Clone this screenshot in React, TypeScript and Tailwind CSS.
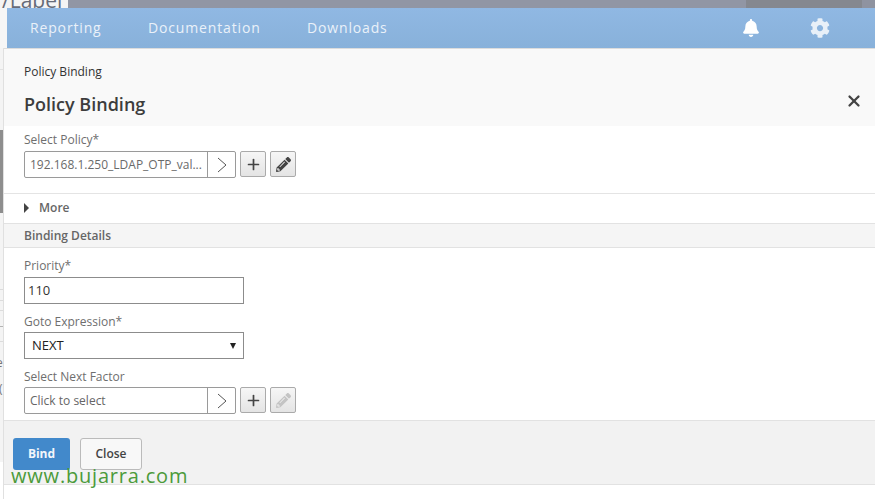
import { FaBell, FaCog, FaPencilAlt } from "react-icons/fa";
import { Plus, X } from "lucide-react";

function Picker({ value, muted, valueClass }: { value: string; muted?: boolean; valueClass: string }) {
  return (
    <div className="flex items-start gap-1">
      <div className="flex h-[27px] w-[212px] rounded-[2px] border border-[#9a9a9a] bg-white">
        <div className={`flex-1 truncate pl-[5px] text-[12px] leading-[25px] ${valueClass}`}>{value}</div>
        <div className="flex w-[28px] items-center justify-center border-l border-[#9a9a9a]">
          <svg width="10" height="16" viewBox="0 0 10 16" fill="none" stroke="#555" strokeWidth="1">
            <path d="M1 1l8 7-8 7" />
          </svg>
        </div>
      </div>
      <button className="flex h-[26px] w-[26px] items-center justify-center rounded-[2px] border border-[#aaa] bg-gradient-to-b from-[#f6f6f6] to-[#e4e4e4] text-[#444]">
        <Plus size={17} strokeWidth={2.4} />
      </button>
      <button className="flex h-[26px] w-[26px] items-center justify-center rounded-[2px] border border-[#aaa] bg-gradient-to-b from-[#f6f6f6] to-[#e4e4e4]">
        <FaPencilAlt size={15} className={muted ? "text-[#c4c4c4]" : "text-[#444]"} />
      </button>
    </div>
  );
}

function Label({ children }: { children: string }) {
  return <div className="text-[12px] leading-[16px] text-[#6e6e6e]">{children}</div>;
}

export default function App() {
  return (
    <div
      className="relative flex h-[499px] w-[875px] flex-col overflow-hidden bg-white"
      style={{ fontFamily: '"Open Sans", "Noto Sans", sans-serif' }}
    >
      {/* page behind the dialog */}
      <div className="flex h-2 shrink-0 overflow-hidden">
        <div className="h-2 w-[68px] overflow-hidden bg-[#f4f4f4] text-[21px] leading-[24px] text-[#666b78]">
          <div className="-mt-[12px] pl-[2px]">/Label</div>
        </div>
        <div className="flex-1 bg-[#9196a4]" />
        <div className="w-[116px] bg-[#85888f]" />
        <div className="w-[13px] bg-[#8f93a0]" />
      </div>

      <div className="flex h-10 shrink-0">
        <div className="w-[7px] bg-[#f6f6f6]" />
        <nav className="flex flex-1 items-center bg-gradient-to-b from-[#90b8e3] to-[#88b1da] pb-[1px] pl-[23px] text-[14px] tracking-[0.85px] text-[#eaf1f9]">
          <span className="w-[118px]">Reporting</span>
          <span className="w-[159px]">Documentation</span>
          <span>Downloads</span>
          <div className="ml-auto flex items-center gap-[50px] pr-[45px]">
            <FaBell size={18} className="text-white" />
            <FaCog size={20} className="text-[#e8f0f8]" />
          </div>
        </nav>
      </div>

      <div className="flex min-h-0 flex-1">
        {/* scrolled page strip on the left */}
        <div className="w-1 shrink-0 border-r border-[#e0e0e0] bg-white">
          <div className="h-[414px] overflow-hidden bg-[#f4f4f4] text-[12px] leading-[16px] text-[#777]">
            <div className="mt-[21px] h-[1px] bg-[#e2e2e2]" />
            <div className="mt-[60px] h-[83px] bg-[#8e8e8e]" />
            <div className="mt-[76px] h-[1px] bg-[#dcdcdc]" />
            <div className="mt-[10px] h-[1px] bg-[#dcdcdc]" />
            <div className="mt-[9px] h-[1px] bg-[#dcdcdc]" />
            <div className="mt-[15px] h-[1px] bg-[#b4b4b4]" />
            <div className="mt-[14px] h-[1px] bg-[#dcdcdc]" />
            <div className="mt-[13px] -ml-[4px]">e</div>
            <div className="mt-[10px] -ml-[1px]">(</div>
          </div>
        </div>

        <div className="flex min-w-0 flex-1 flex-col">
          <header className="h-[78px] shrink-0 border-t border-[#dcdcdc] bg-[#f9f9f9] pl-5 pt-[15px]">
            <div className="text-[12px] leading-[16px] text-[#333]">Policy Binding</div>
            <div className="flex items-center justify-between pr-[12px] pt-[12px]">
              <h1 className="text-[18px] font-semibold leading-[24px] text-[#3d3d3d]">Policy Binding</h1>
              <X size={18} strokeWidth={3} className="-mt-[7px] text-[#444]" />
            </div>
          </header>

          <section className="h-[68px] shrink-0 border-b border-[#e4e4e4] pl-5 pt-[6px]">
            <Label>Select Policy*</Label>
            <div className="pt-[3px]">
              <Picker value="192.168.1.250_LDAP_OTP_val..." valueClass="text-[#6a6a6a]" />
            </div>
          </section>

          <div className="flex h-[30px] shrink-0 items-center gap-[10px] border-b border-[#e2e2e2] pb-[2px] pl-5 text-[12px] font-semibold text-[#666]">
            <span className="h-0 w-0 border-y-[5px] border-l-[5px] border-y-transparent border-l-[#444]" />
            More
          </div>

          <div className="h-[24px] shrink-0 border-b border-[#e2e2e2] bg-[#f5f5f5] pl-5 text-[12px] font-semibold leading-[23px] text-[#666]">
            Binding Details
          </div>

          <section className="h-[173px] shrink-0 border-b border-[#e2e2e2] pl-5 pt-[10px]">
            <Label>Priority*</Label>
            <div className="mt-[3px] flex h-[27px] w-[220px] items-center border border-[#8c8c8c] pl-[3px] text-[13px] text-[#333]">
              110
            </div>
            <div className="mt-[10px]">
              <Label>Goto Expression*</Label>
            </div>
            <div className="mt-[2px] flex h-[27px] w-[220px] items-center justify-between border border-[#8c8c8c] bg-white px-[7px] text-[13px] text-[#222]">
              NEXT
              <span className="h-0 w-0 border-x-[3.5px] border-t-[6px] border-x-transparent border-t-[#222]" />
            </div>
            <div className="mt-[10px]">
              <Label>Select Next Factor</Label>
            </div>
            <div className="mt-[2px]">
              <Picker value="Click to select" muted valueClass="text-[#666]" />
            </div>
          </section>

          <footer className="flex h-[64px] shrink-0 items-start gap-[10px] border-b border-[#e2e2e2] bg-[#f2f2f2] pl-[9px] pt-[17px]">
            <button className="h-8 w-[57px] rounded-[3px] bg-[#4289cb] text-[12px] font-bold text-[#f2f6fb]">Bind</button>
            <button className="h-8 w-[62px] rounded-[3px] border border-[#bbb] bg-[#f8f8f8] text-[12px] font-semibold text-[#444]">
              Close
            </button>
          </footer>
        </div>
      </div>

      <div className="absolute left-[11px] top-[463px] text-[20px] leading-[26px] tracking-[0.8px] text-[#4b9a3a]">
        www.bujarra.com
      </div>
    </div>
  );
}
